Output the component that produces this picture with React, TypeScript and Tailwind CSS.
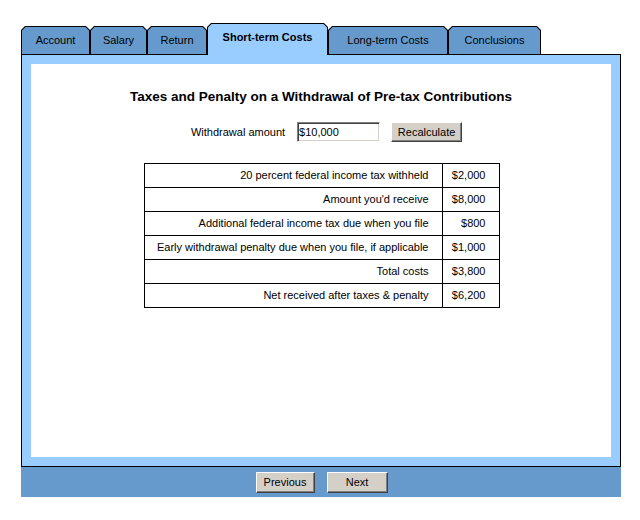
const tabs = [
  { label: "Account", w: "w-[69px]" },
  { label: "Salary", w: "w-[57px]" },
  { label: "Return", w: "w-[60px]" },
  { label: "Short-term Costs", w: "w-[121px]", active: true },
  { label: "Long-term Costs", w: "w-[120px]" },
  { label: "Conclusions", w: "w-[93px]" },
];

const rows = [
  { label: "20 percent federal income tax withheld", value: "$2,000" },
  { label: "Amount you'd receive", value: "$8,000" },
  { label: "Additional federal income tax due when you file", value: "$800" },
  { label: "Early withdrawal penalty due when you file, if applicable", value: "$1,000" },
  { label: "Total costs", value: "$3,800" },
  { label: "Net received after taxes & penalty", value: "$6,200" },
];

function Tab({ label, w, active }: { label: string; w: string; active?: boolean }) {
  return (
    <div
      className={
        "bg-black px-px pt-px [clip-path:polygon(4px_0,calc(100%_-_4px)_0,100%_4px,100%_100%,0_100%,0_4px)] " +
        w +
        (active ? " h-[32px] -mb-px relative z-10" : " h-[28px]")
      }
    >
      <div
        className={
          "h-full flex justify-center [clip-path:polygon(3.6px_0,calc(100%_-_3.6px)_0,100%_3.6px,100%_100%,0_100%,0_3.6px)] " +
          (active
            ? "bg-[#99ccff] items-start pt-[7px] font-bold"
            : "bg-[#6699cc] items-center")
        }
      >
        <span className="text-[11px] leading-[13px] whitespace-nowrap">{label}</span>
      </div>
    </div>
  );
}

function WinButton({ children, w }: { children: string; w: string }) {
  return (
    <button
      className={
        "h-[21px] bg-[#d4d0c8] text-[11px] leading-none border border-t-white border-l-white border-b-[#404040] border-r-[#404040] shadow-[inset_-1px_-1px_0_#808080] " +
        w
      }
    >
      {children}
    </button>
  );
}

export default function App() {
  return (
    <div className="w-[640px] h-[520px] bg-white pt-[23px] pl-[21px] text-black font-['Liberation_Sans',Arial,sans-serif]">
      <div className="w-[600px]">
        {/* Tabs */}
        <div className="flex items-end border-b border-black h-[32px]">
          {tabs.map((t) => (
            <Tab key={t.label} {...t} />
          ))}
        </div>

        {/* Panel */}
        <div className="bg-[#99ccff] border-x border-b border-black p-[9px]">
          <div className="bg-white h-[393px] flex flex-col items-center pt-[25px]">
            <h1 className="text-[13.5px] leading-[16px] font-bold">
              Taxes and Penalty on a Withdrawal of Pre-tax Contributions
            </h1>

            <div className="flex items-center mt-[17px] pl-[11px]">
              <span className="text-[11px]">Withdrawal amount</span>
              <input
                defaultValue="$10,000"
                className="ml-[12px] w-[83px] h-[20px] bg-white text-[11px] px-[1px] outline-none border border-t-[#808080] border-l-[#808080] border-b-white border-r-white shadow-[inset_1px_1px_0_#404040,inset_-1px_-1px_0_#d4d0c8]"
              />
              <button className="ml-[11px] w-[71px] h-[20px] bg-[#d4d0c8] text-[11px] leading-none border border-t-white border-l-white border-b-[#404040] border-r-[#404040] shadow-[inset_-1px_-1px_0_#808080]">
                Recalculate
              </button>
            </div>

            <table className="mt-[21px] ml-[1px] border-collapse border border-black text-[11px]">
              <tbody>
                {rows.map((r) => (
                  <tr key={r.label} className="h-[24px]">
                    <td className="border border-black w-[298px] text-right pr-[13px] py-0 leading-none">
                      {r.label}
                    </td>
                    <td className="border border-black w-[57px] text-right pr-[13px] py-0 leading-none">
                      {r.value}
                    </td>
                  </tr>
                ))}
              </tbody>
            </table>
          </div>
        </div>

        {/* Footer */}
        <div className="h-[30px] bg-[#6699cc] flex items-center justify-center gap-[12px] pl-[1px]">
          <WinButton w="w-[59px]">Previous</WinButton>
          <WinButton w="w-[61px]">Next</WinButton>
        </div>
      </div>
    </div>
  );
}
